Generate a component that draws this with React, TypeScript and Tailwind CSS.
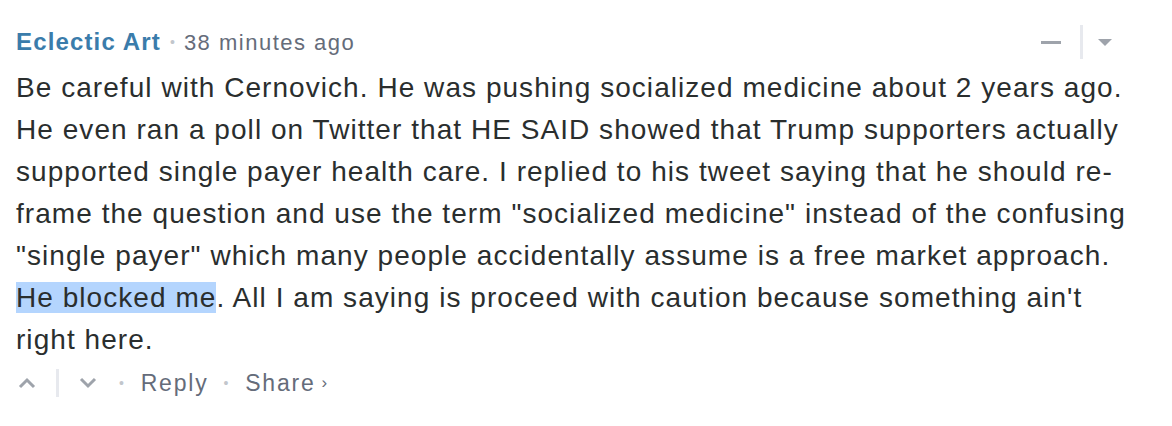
export default function App() {
  const lines = [
    'Be careful with Cernovich. He was pushing socialized medicine about 2 years ago.',
    'He even ran a poll on Twitter that HE SAID showed that Trump supporters actually',
    'supported single payer health care. I replied to his tweet saying that he should re-',
    'frame the question and use the term "socialized medicine" instead of the confusing',
    '"single payer" which many people accidentally assume is a free market approach.',
  ];
  return (
    <div className="w-[1172px] h-[426px] bg-white font-['Liberation_Sans',Arial,sans-serif] text-[#2a2e2e] pt-[26px] pl-4 pr-[60px]">
      {/* header */}
      <div className="flex items-center h-[32px]">
        <span className="text-[24px] font-bold tracking-[1.15px] text-[#3a7cab]">Eclectic Art</span>
        <span className="mx-[9px] text-[#c2c6cc] text-[14px]">•</span>
        <span className="text-[22px] tracking-[1.5px] text-[#656c7a]">38 minutes ago</span>
        <div className="ml-auto flex items-center h-[32px]">
          <span className="block w-[20px] h-[3px] bg-[#9ea3ab] mr-[19px]" />
          <span className="block w-[3px] h-[34px] bg-[#e7e9ee] mr-[15px]" />
          <span className="block w-0 h-0 border-l-[7px] border-r-[7px] border-t-[7px] border-l-transparent border-r-transparent border-t-[#9ea3ab]" />
        </div>
      </div>

      {/* body */}
      <div className="text-[28px] tracking-[1.05px] leading-[42px] mt-[9px] whitespace-nowrap">
        {lines.map((l, i) => (
          <div key={i}>{l}</div>
        ))}
        <div>
          <span className="bg-[#b4d5fe]">He blocked me</span>. All I am saying is proceed with caution because something ain't
        </div>
        <div>right here.</div>
      </div>

      {/* footer */}
      <div className="flex items-center h-[32px] mt-[6px] text-[23px] tracking-[1.8px] text-[#656c7a]">
        <svg width="20" height="12" viewBox="0 0 20 12" className="ml-[1px]">
          <polyline points="3,10 10,3 17,10" fill="none" stroke="#9ea3ab" strokeWidth="3" />
        </svg>
        <span className="block w-[3px] h-[28px] bg-[#e7e9ee] ml-[19px]" />
        <svg width="20" height="12" viewBox="0 0 20 12" className="ml-[19px]">
          <polyline points="3,2 10,9 17,2" fill="none" stroke="#9ea3ab" strokeWidth="3" />
        </svg>
        <span className="ml-[21px] mr-[15px] text-[#c2c6cc] text-[14px]">•</span>
        <span>Reply</span>
        <span className="mx-[15px] text-[#c2c6cc] text-[14px]">•</span>
        <span>Share</span>
        <span className="ml-[6px] text-[17px]">›</span>
      </div>
    </div>
  );
}
